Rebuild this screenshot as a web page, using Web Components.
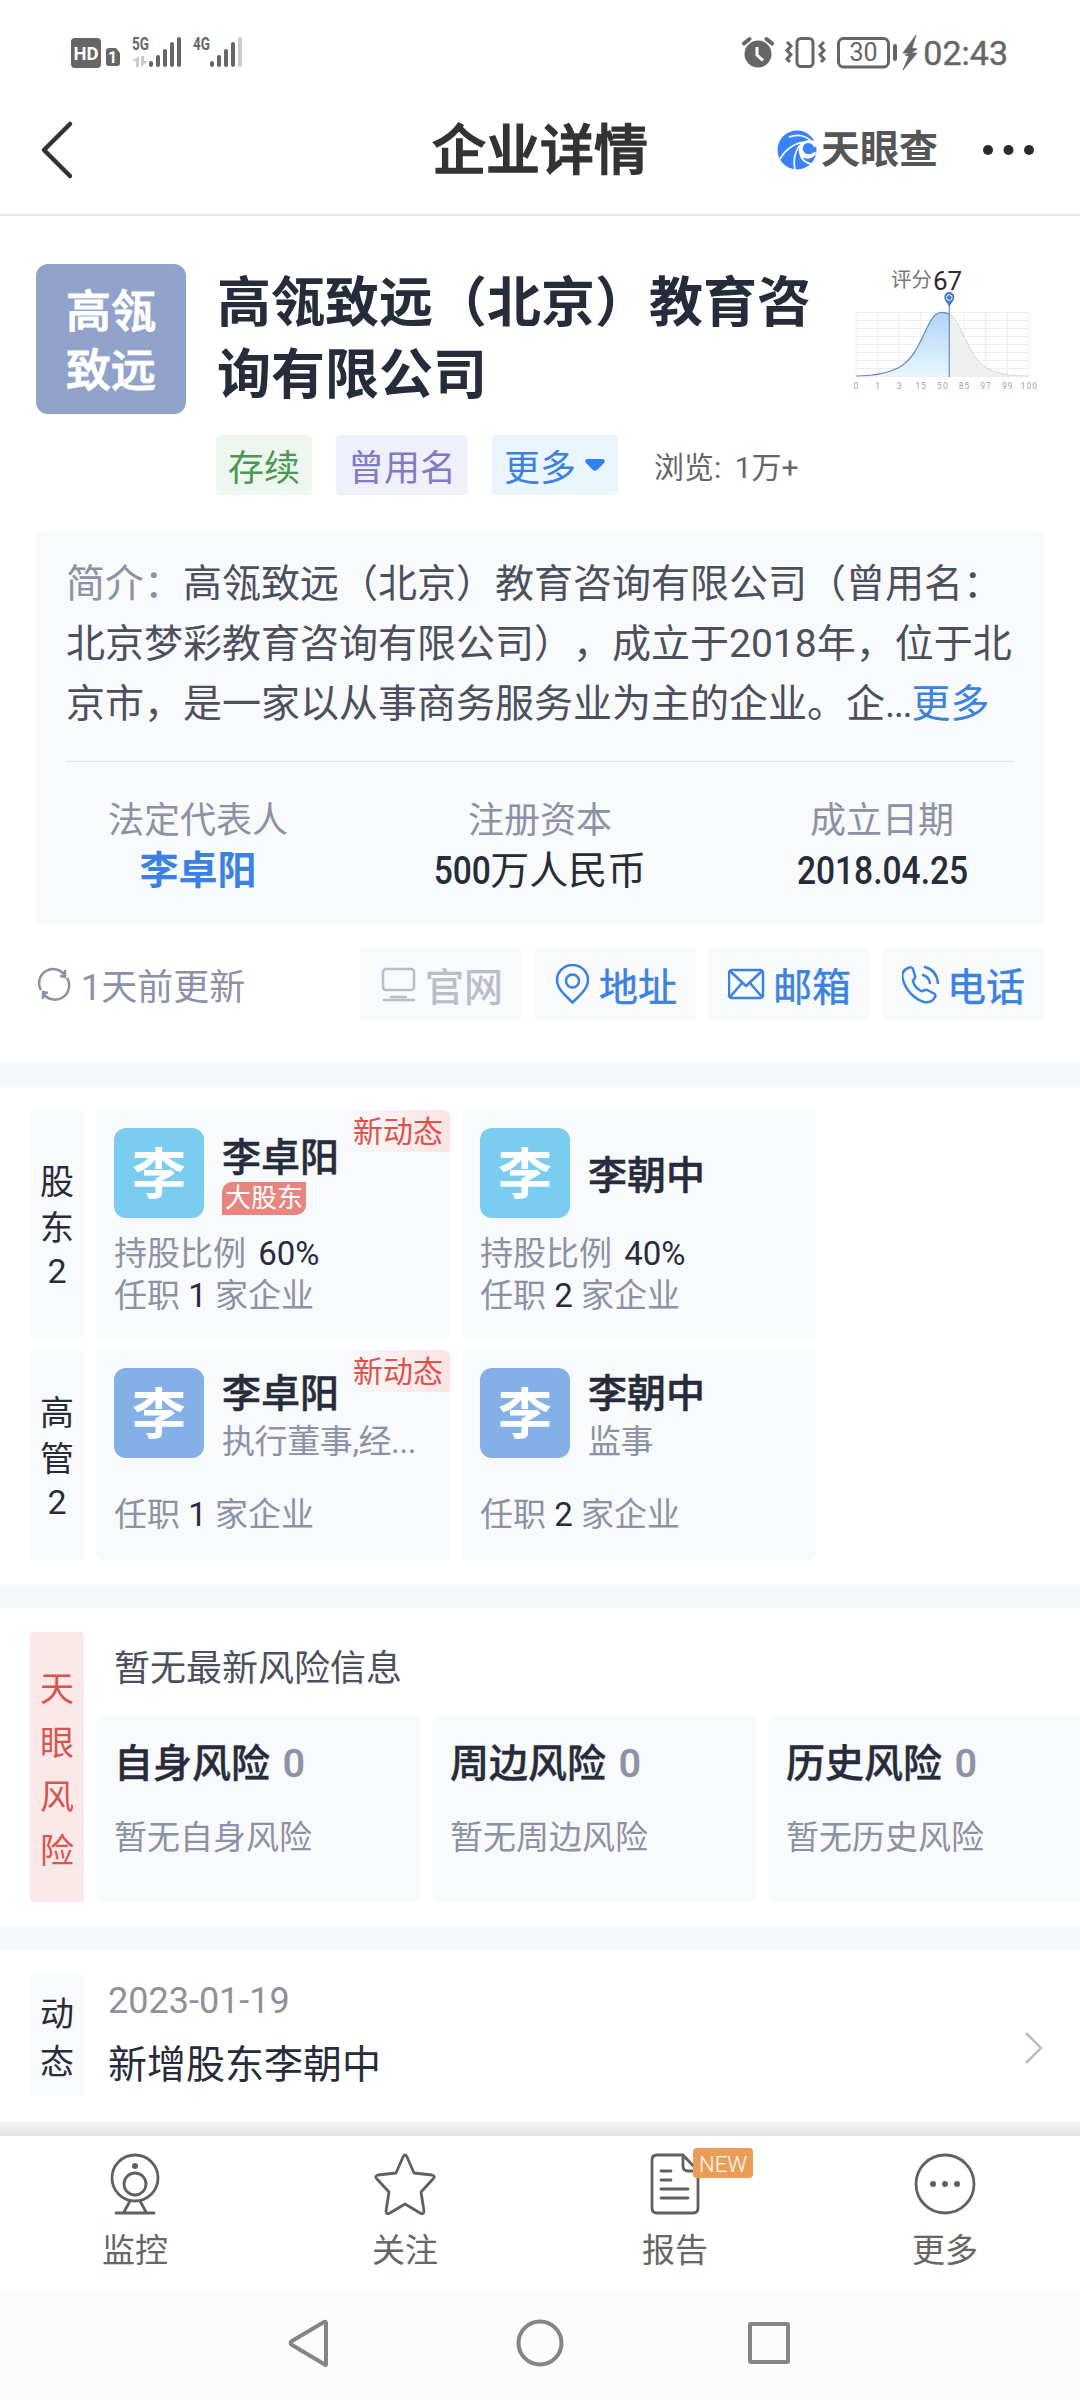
<!DOCTYPE html>
<html lang="zh-CN">
<head>
<meta charset="utf-8">
<title>企业详情</title>
<style>
    body {
        margin: 0;
        width: 1080px;
        height: 2400px;
        overflow: hidden;
        background: #fff;
        color: #272c3b;
        font-family: Roboto, "Noto Sans CJK SC", sans-serif;
        text-spacing-trim: space-all;
        --blue: #3b82e0;
        --muted: #8c91a5;
        --card: #f8fafc;
    }
</style>
</head>
<body>
<status-bar></status-bar>
<nav-bar>企业详情</nav-bar>
<company-head>
    <span slot="name">高瓴致远（北京）教育咨询有限公司</span>
    <company-tag slot="tags" kind="green">存续</company-tag>
    <company-tag slot="tags" kind="purple">曾用名</company-tag>
    <company-tag slot="tags" kind="blue" arrow>更多</company-tag>
    <span slot="views">浏览: 1万+</span>
</company-head>
<company-summary></company-summary>
<contact-row></contact-row>
<section-gap style="height: 24px"></section-gap>
<people-row label="股东2" style="margin-top: 24px; height: 228px">
    <person-card name="李卓阳" badge="大股东" share="60%" count="1" fresh></person-card>
    <person-card name="李朝中" share="40%" count="2"></person-card>
</people-row>
<people-row label="高管2" style="margin-top: 12px; height: 210px">
    <person-card name="李卓阳" role="执行董事,经..." count="1" fresh color="#83b0e7"></person-card>
    <person-card name="李朝中" role="监事" count="2" color="#83b0e7"></person-card>
</people-row>
<section-gap style="margin-top: 26px; height: 22px"></section-gap>
<risk-panel>
    <risk-card kind="自身风险"></risk-card>
    <risk-card kind="周边风险"></risk-card>
    <risk-card kind="历史风险"></risk-card>
</risk-panel>
<section-gap style="height: 23px"></section-gap>
<news-row date="2023-01-19">新增股东李朝中</news-row>
<tab-bar></tab-bar>
<system-nav></system-nav>

<script>
const define = (name, html, setup) => {
    const template = document.createElement('template');
    template.innerHTML = html;
    customElements.define(name, class extends HTMLElement {
        constructor() {
            super();
            this.root = this.attachShadow({ mode: 'open' });
            this.root.append(template.content.cloneNode(true));
        }
        connectedCallback() {
            if (setup) setup(this, this.root);
        }
    });
};

define('status-bar', `
<style>
    :host { display: flex; justify-content: space-between; height: 80px; padding: 0 72px 0 70px; box-sizing: border-box; color: #666; }
    svg { display: block; height: 80px; }
    .right { display: flex; }
    time { font-size: 34px; line-height: 107px; -webkit-text-stroke: .4px; }
</style>
<svg width="180" viewBox="70 0 180 80" fill="#666">
    <rect x="71" y="38" width="30" height="30" rx="4"/>
    <text x="86" y="60" font-size="19" font-weight="700" fill="#fff" text-anchor="middle" textLength="25" lengthAdjust="spacingAndGlyphs">HD</text>
    <path d="M109 48h7l4 5v10q0 3-3 3h-8q-3 0-3-3v-12q0-3 3-3z"/>
    <text x="112.500" y="63" font-size="16" font-weight="700" fill="#fff" text-anchor="middle">1</text>
    <text x="132" y="50" font-size="18" font-weight="700" textLength="17" lengthAdjust="spacingAndGlyphs">5G</text>
    <g fill="#ccc"><path d="M139 67h-3v-6h-4l7-5zM141 56h3v5h4l-7 6z"/></g>
    <g stroke="#666" stroke-width="4" stroke-linecap="round">
        <path d="M151 63v2M158 57v8M165 51v14M172 44v21M179 39v26"/>
        <path d="M212 63v2M219 57v8M226 51v14M233 44v21"/>
        <path stroke="#ccc" d="M240 39v26"/>
    </g>
    <text x="193" y="50" font-size="18" font-weight="700" textLength="17" lengthAdjust="spacingAndGlyphs">4G</text>
</svg>
<div class="right">
    <svg width="182" viewBox="742 0 182 80" fill="none" stroke="#666" stroke-width="3">
        <circle cx="759" cy="54" r="13.500" fill="#666" stroke="none"/>
        <path d="M745 43.500l5.500-4.500M773 43.500l-5.500-4.500" stroke-width="4" stroke-linecap="round"/>
        <path d="M758 47v8l6 5.500" stroke="#fff"/>
        <rect x="798" y="38.500" width="16" height="28" rx="4"/>
        <path d="M788 42l4 4-4 4.500 4 4-4 4.500 3 3M825 42l-4 4 4 4.500-4 4 4 4.500-3 3"/>
        <rect x="839.500" y="38.500" width="50" height="28.500" rx="5"/>
        <path d="M896 46v13" stroke-width="4" stroke-linecap="round"/>
        <text x="864.500" y="61" font-size="25" fill="#666" stroke="none" text-anchor="middle">30</text>
        <path d="M917 35l-13 18h7l-5 2 4 1-6 14 14-17h-6l6-4-5-1z" fill="#666" stroke="#666" stroke-width=".8"/>
    </svg>
    <time>02:43</time>
</div>
`);

define('nav-bar', `
<style>
    :host { display: grid; grid-template-columns: 1fr auto 1fr; align-items: center; height: 136px; box-sizing: border-box; border-bottom: 2px solid #e4e4e4; color: #333; }
    h1 { margin: 10px 0 0; font-size: 54px; line-height: 70px; font-weight: 500; -webkit-text-stroke: 1.400px; }
    .back { margin: 6px 0 0 40px; }
    .right { display: flex; align-items: center; justify-content: flex-end; padding: 6px 45px 0 0; }
    b { font-size: 39px; line-height: 40px; color: #555; margin: 0 43px 0 4px; }
    svg { display: block; }
</style>
<svg class="back" width="34" height="60" fill="none" stroke="#333" stroke-width="4.500" stroke-linecap="round" stroke-linejoin="round"><path d="M30 4L4 30l26 26"/></svg>
<h1><slot></slot></h1>
<div class="right">
    <svg width="40" height="40" viewBox="0 0 40 40">
        <circle cx="20" cy="20" r="19.500" fill="#3a82f7"/>
        <path fill="#fff" d="M40 13C36 9 29 9 25 13c-5 5-4 13 2 15 5 2 10-1 13-5l-3-1c-3 3-8 3-10 0-3-4 0-9 4-9 3 0 5 2 6 4h3z"/>
        <g fill="none" stroke="#fff" stroke-width="1.700">
            <path d="M12 7c8-3 17-2 23 5"/>
            <path d="M3 29c5-9 12-15 24-17"/>
            <path d="M18 40c-2-10 0-20 7-27"/>
            <path d="M35 34c-7-1-11-5-12-11"/>
        </g>
    </svg>
    <b>天眼查</b>
    <svg width="54" height="12" fill="#2b2b2b"><circle cx="7" cy="6" r="5"/><circle cx="27.500" cy="6" r="5"/><circle cx="48" cy="6" r="5"/></svg>
</div>
`);

define('company-tag', `
<style>
    :host { display: flex; align-items: center; height: 60px; padding: 0 12px; border-radius: 4px; font-size: 36px; gap: 8px; }
    :host([kind=green]) { background: #edf7ef; color: #4a9950; }
    :host([kind=purple]) { background: #f0f0fb; color: #7f7bc4; }
    :host([kind=blue]) { background: #eaf5fe; color: #3b82e0; }
    svg { display: none; }
    :host([arrow]) svg { display: block; }
</style>
<slot></slot>
<svg width="22" height="14"><path d="M3 1h16q3 1 1 4l-7 7q-2 1.500-4 0L2 5Q0 2 3 1z" fill="#2f7ff5"/></svg>
`);

define('score-chart', `
<style>
    :host { display: block; }
    svg { display: block; }
</style>
<svg width="196" height="130">
    <defs><linearGradient id="fill" x1="0" y1="0" x2="0" y2="1"><stop offset="0" stop-color="#a9cff5"/><stop offset="1" stop-color="#e4f6fe"/></linearGradient></defs>
    <path class="grid" stroke="#eceef2" fill="none"/>
    <path d="M8 112C22 112 38 110 50 104 68 95 74 72 82 58 86 50 90 48.300 94 48.300c3 0 5 .7 7 1.700V112z" fill="url(#fill)" fill-opacity=".9"/>
    <path d="M101 50c11 6 15 30 31 49 12 11 28 13 49 13h-80z" fill="#eee" fill-opacity=".9"/>
    <path d="M101 50c11 6 15 30 31 49 12 11 28 13 49 13" fill="none" stroke="#d6d6d6"/>
    <path d="M8 112C22 112 38 110 50 104 68 95 74 72 82 58 86 50 90 48.300 94 48.300c3 0 5 .7 7 1.700" fill="none" stroke="#6485c8" stroke-width="1.200"/>
    <path d="M101.300 42v71" stroke="#6b93da" stroke-width="1.300"/>
    <path d="M101.300 44c-1-5-5-7-5-11a5 5 0 0 1 10 0c0 4-4 6-5 11z" fill="#3f7bd0"/>
    <circle cx="101.300" cy="33.500" r="2.800" fill="none" stroke="#fff"/>
    <text x="43" y="23" font-size="20.500" fill="#777">评分</text>
    <text x="85" y="26" font-size="26" fill="#2b2b2b">67</text>
    <g class="axis" font-size="8.500" letter-spacing="1" fill="#9a9fc4" text-anchor="middle"></g>
</svg>
`, (el, root) => {
    let d = '';
    for (let i = 0; i < 9; i++) d += `M${8 + i * 21.6} 48v64`;
    for (let i = 0; i < 9; i++) d += `M8 ${48.5 + i * 8}h173`;
    root.querySelector('.grid').setAttribute('d', d);
    root.querySelector('.axis').innerHTML = [0, 1, 3, 15, 50, 85, 97, 99, 100]
        .map((n, i) => `<text x="${8.5 + i * 21.6}" y="125">${n}</text>`).join('');
});

define('company-head', `
<style>
    :host { display: flex; height: 315px; box-sizing: border-box; padding: 48px 36px 0; }
    .logo { flex: none; width: 150px; height: 150px; box-sizing: border-box; padding: 19px 30px 0; border-radius: 12px; background: #91a2cb; color: #fff; font-size: 45px; line-height: 59px; font-weight: 500; -webkit-text-stroke: 1px; }
    .info { width: 602px; margin: 4px 0 0 31px; }
    .name { font-size: 54px; line-height: 72px; font-weight: 700; }
    .tags { display: flex; align-items: center; gap: 24px; margin: 23px 0 0 -1px; white-space: nowrap; }
    .views { font-size: 30px; color: #666; margin-left: 12px; word-spacing: 6px; }
    score-chart { margin-left: 29px; }
</style>
<div class="logo">高瓴致远</div>
<div class="info">
    <div class="name"><slot name="name"></slot></div>
    <div class="tags"><slot name="tags"></slot><span class="views"><slot name="views"></slot></span></div>
</div>
<score-chart></score-chart>
`);

define('company-summary', `
<style>
    :host { display: block; box-sizing: border-box; height: 393px; margin: 0 36px; padding: 23px 30px 0; background: var(--card); border-radius: 6px; }
    p { margin: 0; font-size: 39px; line-height: 60px; color: #4b4f5e; white-space: nowrap; }
    i { font-style: normal; color: var(--muted); }
    a { color: var(--blue); }
    u { text-decoration: none; letter-spacing: -1.500px; }
    hr { border: 0; height: 1px; background: #e3e6ec; margin: 27px 0 0; }
    .facts { display: grid; grid-template-columns: 324px 360px 324px; margin: 0 -30px; padding-top: 34px; text-align: center; }
    dl { margin: 0; }
    dt { font-size: 36px; line-height: 50px; color: var(--muted); }
    dd { margin: 0; font-size: 39px; line-height: 50px; font-weight: 500; }
    dd.link { color: var(--blue); font-weight: 700; }
    dd span { display: inline-block; transform: scaleX(.86); }
    .reg { font-weight: 400; }
    .reg span { margin: 0 -5px; font-weight: 500; }
</style>
<p><i>简介：</i>高瓴致远（北京）教育咨询有限公司（曾用名：<br>北京梦彩教育咨询有限公司），成立于2018年，位于北<br>京市，是一家以从事商务服务业为主的企业。企<u>...</u><a>更多</a></p>
<hr>
<div class="facts">
    <dl><dt>法定代表人</dt><dd class="link">李卓阳</dd></dl>
    <dl><dt>注册资本</dt><dd class="reg"><span>500</span>万人民币</dd></dl>
    <dl><dt>成立日期</dt><dd><span>2018.04.25</span></dd></dl>
</div>
`);

define('contact-button', `
<style>
    :host { display: flex; align-items: center; box-sizing: border-box; width: 162px; height: 72px; padding-left: 20px; gap: 5px; border-radius: 4px; background: var(--card); color: var(--blue); font-size: 39px; -webkit-text-stroke: .5px; }
    :host([off]) { color: #b9bccb; }
    svg { flex: none; fill: none; stroke: currentColor; stroke-width: 2.500; stroke-linecap: round; stroke-linejoin: round; }
    span { white-space: nowrap; }
</style>
<svg width="40" height="40"></svg><span><slot></slot></span>
`, (el, root) => {
    const paths = {
        site: '<rect x="3" y="5" width="31" height="21" rx="3"/><path d="M11 33h15M4 36h30"/>',
        place: '<path d="M18.500 38.500C12 32 3 25 3 16a15.500 15 0 0 1 31 0c0 9-9 16-15.500 22.500z"/><circle cx="18.500" cy="17" r="6.500"/>',
        mail: '<rect x="1" y="6" width="34" height="28" rx="3"/><path d="M2 7l16 15L34 7M2 33l12-14M34 33L22 19"/>',
        phone: '<path d="M6 4c-5 2-7 6-5 12 3 10 11 19 21 22 5 1 9-1 11-5 1-2 0-3-2-4l-6-3c-3-1-4 2-6 1-4-2-7-6-8-10 0-2 3-2 2-5l-2-7c-1-2-3-2-5-1z"/><path d="M21 11c4 1 6 4 7 8M23 3c8 2 12 8 13 16"/>',
    };
    root.querySelector('svg').innerHTML = paths[el.getAttribute('icon')];
});

define('contact-row', `
<style>
    :host { display: flex; align-items: center; height: 138px; box-sizing: border-box; padding: 0 36px 18px; gap: 12px; }
    .updated { display: flex; align-items: center; gap: 9px; margin-right: auto; color: var(--muted); font-size: 36px; }
</style>
<div class="updated">
    <svg width="36" height="36" fill="none" stroke="#8c91a5" stroke-width="2.500"><path d="M5 24A13.500 13.500 0 0 1 29 10M31 12A13.500 13.500 0 0 1 7 27M29 4v7l-5-1M7 33v-7l5 1"/></svg>
    <span>1天前更新</span>
</div>
<contact-button icon="site" off>官网</contact-button>
<contact-button icon="place">地址</contact-button>
<contact-button icon="mail">邮箱</contact-button>
<contact-button icon="phone">电话</contact-button>
`);

define('section-gap', `
<style>
    :host { display: block; background: #f5f7fb; }
</style>
`);

// vertical label on the left of a section, one character per line
define('side-label', `
<style>
    :host { display: flex; flex-direction: column; align-items: center; justify-content: center; flex: none; width: 54px; box-sizing: border-box; padding-top: 5px; border-radius: 4px; background: var(--card); font-size: 34px; line-height: 46px; }
    .digit { margin-top: -3px; }
</style>
`, (el, root) => {
    for (const ch of el.getAttribute('text') || '') {
        const span = document.createElement('span');
        span.textContent = ch;
        if (/\d/.test(ch)) span.className = 'digit';
        root.append(span);
    }
});

define('people-row', `
<style>
    :host { display: flex; gap: 12px; padding-left: 30px; }
</style>
<slot></slot>
`, (el, root) => {
    const label = document.createElement('side-label');
    label.setAttribute('text', el.getAttribute('label'));
    root.querySelector('slot').before(label);
});

define('person-card', `
<style>
    :host { display: flex; flex-direction: column; position: relative; box-sizing: border-box; width: 354px; padding: 18px 18px 0; border-radius: 6px; background: var(--card); }
    .top { display: flex; gap: 18px; height: 90px; }
    .face { width: 90px; height: 90px; border-radius: 12px; background: #7bcdef; color: #fff; font-size: 54px; line-height: 96px; font-weight: 700; text-align: center; }
    .who { display: flex; flex-direction: column; justify-content: center; align-items: flex-start; padding-top: 6px; box-sizing: border-box; white-space: nowrap; }
    .who.ranked { padding-top: 0; }
    .name { font-size: 39px; line-height: 48px; font-weight: 500; -webkit-text-stroke: .5px; }
    .badge { height: 33px; padding: 0 3px; margin-bottom: -3px; border-radius: 10px 0 10px 0; background: #e8857e; color: #fff; font-size: 26px; line-height: 33px; }
    .role { font-size: 33px; line-height: 48px; letter-spacing: -.400px; color: var(--muted); padding-bottom: -2px; }
    .who.titled { padding-top: 10px; }
    .lines { margin-top: 15px; font-size: 33px; line-height: 42px; color: var(--muted); }
    .lines b { font-weight: 400; color: #272c3b; }
    .share b { margin-left: 4px; }
    .fresh { position: absolute; top: 0; right: 0; padding: 0 7px 0 10px; line-height: 43px; height: 42px; font-size: 30px; color: #df5149; background: linear-gradient(90deg, #f9eff100, #fbe3e3); border-radius: 0 6px 0 0; }
</style>
<div class="top">
    <div class="face">李</div>
    <div class="who"><span class="name"></span></div>
</div>
<div class="lines"></div>
`, (el, root) => {
    const get = key => el.getAttribute(key);
    const who = root.querySelector('.who');
    root.querySelector('.name').textContent = get('name');
    if (get('color')) root.querySelector('.face').style.background = get('color');
    if (get('badge')) {
        who.classList.add('ranked');
        who.insertAdjacentHTML('beforeend', `<span class="badge">${get('badge')}</span>`);
    }
    if (get('role')) {
        who.classList.add('titled');
        who.insertAdjacentHTML('beforeend', `<span class="role">${get('role')}</span>`);
    }
    const lines = root.querySelector('.lines');
    if (get('share')) lines.innerHTML = `<div class="share">持股比例 <b>${get('share')}</b></div>`;
    else lines.style.marginTop = '36px';
    lines.insertAdjacentHTML('beforeend', `<div>任职 <b>${get('count')}</b> 家企业</div>`);
    if (el.hasAttribute('fresh')) root.append(Object.assign(document.createElement('span'), { className: 'fresh', textContent: '新动态' }));
});

define('risk-card', `
<style>
    :host { display: block; flex: none; box-sizing: border-box; width: 324px; height: 186px; padding: 21px 18px 0; border-radius: 6px; background: var(--card); }
    h3 { margin: 0; font-size: 39px; line-height: 54px; font-weight: 500; -webkit-text-stroke: .4px; }
    h3 b { margin-left: 3px; color: var(--muted); font-weight: 500; }
    p { margin: 20px 0 0; font-size: 33px; line-height: 54px; color: var(--muted); }
</style>
<h3><span></span> <b>0</b></h3>
<p></p>
`, (el, root) => {
    root.querySelector('span').textContent = el.getAttribute('kind');
    root.querySelector('p').textContent = '暂无' + el.getAttribute('kind');
});

define('risk-panel', `
<style>
    :host { display: flex; gap: 12px; height: 318px; box-sizing: border-box; padding: 24px 0 24px 30px; overflow: hidden; }
    side-label { background: #fbe9ea; color: #d8554d; line-height: 54px; }
    .title { height: 84px; box-sizing: border-box; padding: 10px 0 0 18px; font-size: 36px; line-height: 54px; color: #4b4f5e; }
    .cards { display: flex; gap: 12px; }
</style>
<side-label text="天眼风险"></side-label>
<div>
    <div class="title">暂无最新风险信息</div>
    <div class="cards"><slot></slot></div>
</div>
`);

define('news-row', `
<style>
    :host { display: block; height: 187px; }
    .row { display: flex; height: 172px; box-sizing: border-box; padding: 25px 36px 25px 30px; }
    .text { flex: 1; padding-left: 24px; }
    .date { font-size: 36px; line-height: 54px; color: #8e909c; }
    .what { margin-top: 10px; font-size: 39px; line-height: 54px; }
    svg { margin-top: 57px; }
    .shade { height: 15px; background: linear-gradient(#f7f7f7, #e0e0e0); }
    side-label { line-height: 48px; }
</style>
<div class="row">
    <side-label text="动态"></side-label>
    <div class="text"><div class="date"></div><div class="what"><slot></slot></div></div>
    <svg width="20" height="34" fill="none" stroke="#bfbfbf" stroke-width="2.500"><path d="M2 2l15 15L2 32"/></svg>
</div>
<div class="shade"></div>
`, (el, root) => {
    root.querySelector('.date').textContent = el.getAttribute('date');
});

define('tab-bar', `
<style>
    :host { display: grid; grid-template-columns: repeat(4, 1fr); height: 154px; background: #fff; color: #666; }
    div { position: relative; display: flex; flex-direction: column; align-items: center; padding-top: 17px; font-size: 33px; line-height: 44px; }
    svg { fill: none; stroke: #606060; stroke-width: 2.800; stroke-linejoin: round; stroke-linecap: round; margin-bottom: 14px; }
    .dot { fill: #606060; stroke: none; }
    em { position: absolute; left: 153px; top: 12px; width: 60px; height: 30px; border-radius: 4px; background: #eb9d58; color: #fff; font-style: normal; font-size: 22px; font-weight: 300; line-height: 33px; text-align: center; }
</style>
<div><svg width="62" height="62"><circle cx="31" cy="25" r="23"/><circle cx="31" cy="31" r="11"/><circle class="dot" cx="31" cy="13" r="3"/><path d="M26 48l-6 11M36 48l6 11M12 60h38"/></svg>监控</div>
<div><svg width="62" height="62"><path d="M29 4q2-4 4 0l7 16 18 2q4 1 1 4L47 39l3 19q0 4-4 2L31 51 16 60q-4 2-4-2l3-19L3 26q-3-3 1-4l18-2z"/></svg>关注</div>
<div><svg width="62" height="62"><path d="M39 2H13q-5 0-5 5v48q0 5 5 5h36q5 0 5-5V18L39 2v11q0 5 5 5h10"/><path d="M17 18h10M17 27h10M17 36h27M17 45h27"/></svg>报告<em>NEW</em></div>
<div><svg width="62" height="62"><circle cx="31" cy="31" r="29"/><circle class="dot" cx="19" cy="31" r="3"/><circle class="dot" cx="31" cy="31" r="3"/><circle class="dot" cx="43" cy="31" r="3"/></svg>更多</div>
`);

define('system-nav', `
<style>
    :host { display: flex; justify-content: center; height: 110px; box-sizing: border-box; padding-top: 28px; background: #fcfcfc; }
    svg { fill: none; stroke: #858585; stroke-width: 4; stroke-linejoin: round; }
</style>
<svg width="506" height="50" viewBox="287 2318 506 50">
    <path d="M326 2323v41q0 2-2 0l-32-19q-3-2 0-4l32-19q2-1 2 1z"/>
    <circle cx="540" cy="2343" r="21.500"/>
    <rect x="750" y="2324" width="38" height="38" rx="1"/>
</svg>
`);
</script>
</body>
</html>
